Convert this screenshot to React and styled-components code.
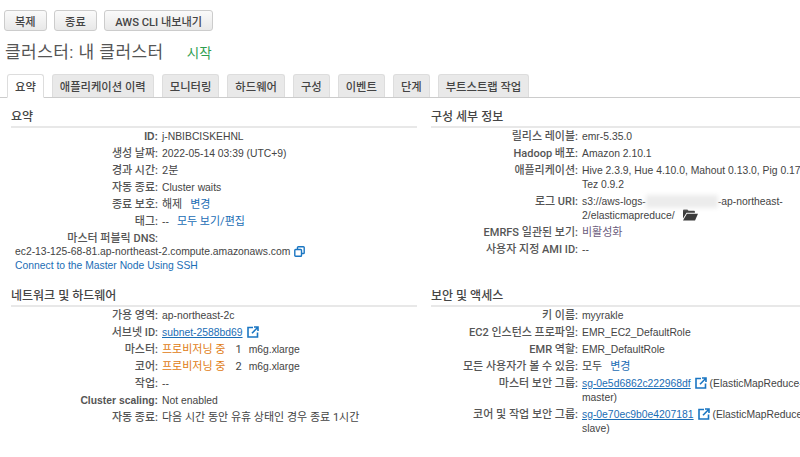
import React from 'react';
import styled, { createGlobalStyle, css } from 'styled-components';

const GlobalStyle = createGlobalStyle`
  html, body {
    margin: 0;
    padding: 0;
    background: #fff;
    overflow: hidden;
  }
  body {
    font-family: Roboto, "Noto Sans CJK KR", sans-serif;
    font-size: 11px;
    color: #444;
  }
`;

const latinText = css`
  font-family: "Liberation Sans", "Noto Sans CJK KR", sans-serif;
  font-size: 10.35px;
`;

const Page = styled.div`
  width: 800px;
  height: 457px;
  overflow: hidden;
  padding-top: 10px;
  box-sizing: border-box;
`;

const Toolbar = styled.div`
  display: flex;
  gap: 7.5px;
  padding-left: 4px;
`;

const Button = styled.button`
  height: 21px;
  padding: 0 10px;
  border: 1px solid #ccc;
  border-radius: 3px;
  background: linear-gradient(#fafafa, #e8e8e8);
  color: #444;
  font-family: inherit;
  font-size: 11.2px;
  font-weight: 500;
  white-space: nowrap;
`;

const TitleRow = styled.div`
  display: flex;
  align-items: baseline;
  height: 26px;
  margin-top: 7px;
  padding-left: 5px;
`;

const Title = styled.h1`
  margin: 0;
  font-size: 17px;
  font-weight: normal;
  letter-spacing: 0.45px;
  color: #555;
`;

const Status = styled.span`
  margin-left: 23px;
  font-size: 13.5px;
  color: #2e9e4f;
`;

const Tabs = styled.div`
  display: flex;
  gap: 8px;
  height: 23px;
  margin-top: 10px;
  padding-left: 7px;
  border-bottom: 1px solid #ccc;
`;

const Tab = styled.div`
  display: flex;
  align-items: center;
  height: 22px;
  padding: 0 7px;
  border: 1px solid #ddd;
  border-bottom: ${({ $active }) => ($active ? '1px solid #fff' : '0')};
  border-radius: 3px 3px 0 0;
  background: ${({ $active }) => ($active ? '#fff' : '#e9e9e9')};
  color: #444;
  font-size: 11.3px;
  font-weight: 500;
  white-space: nowrap;
`;

const Columns = styled.div`
  display: grid;
  grid-template-columns: 406px 420px;
  column-gap: 14px;
  padding-left: 11px;
  margin-top: 12px;
`;

const Section = styled.section`
  height: ${({ $height }) => $height}px;
`;

const SectionTitle = styled.h2`
  margin: 0;
  height: 15px;
  padding-bottom: 1px;
  border-bottom: 2px solid #e8e8e8;
  font-size: 12px;
  line-height: 15px;
  font-weight: 500;
  color: #444;
`;

const Rows = styled.div`
  display: grid;
  grid-template-columns: ${({ $label }) => $label}px ${({ $value }) => $value}px;
  column-gap: 4px;
  row-gap: 3px;
  margin-top: 2px;
  line-height: 14px;
`;

const Label = styled.div`
  text-align: right;
  font-weight: ${({ $latin }) => ($latin ? 700 : 500)};
  color: #555;
  white-space: nowrap;
  ${({ $latin }) => $latin && latinText}
`;

const Value = styled.div`
  min-height: 14px;
  color: ${({ $muted }) => ($muted ? '#6b5b7b' : '#444')};
  ${({ $latin }) => $latin && latinText}
`;

const Latin = styled.span`
  ${latinText}
  margin-left: ${({ $gap }) => $gap || 0}px;
`;

const Link = styled.a`
  color: #1a6db5;
  margin-left: ${({ $gap }) => $gap || 0}px;
  text-decoration: ${({ $under }) => ($under ? 'underline' : 'none')};
`;

const Provisioning = styled.span`
  color: #e07b12;
  margin-right: 10px;
`;

const Blurred = styled.span`
  display: inline-block;
  width: 72px;
  height: 13px;
  vertical-align: -3px;
  background: #ececec;
  filter: blur(2px);
`;

const DnsBlock = styled.div`
  ${latinText}
  padding-left: 4px;
  line-height: 14px;
  margin-top: -1px;
`;

const IconWrap = styled.span`
  display: inline-block;
  margin-left: ${({ $gap }) => $gap || 4}px;
  vertical-align: -2px;
  svg {
    display: block;
  }
`;

const ExternalIcon = () => (
  <IconWrap>
    <svg width="12" height="12" viewBox="0 0 12 12" fill="none" stroke="#1a76c2" strokeWidth="1.6">
      <path d="M6 1.5H1v9.5h9.5V6.5" />
      <path d="M5 7.2 10.4 1.8M7 1h4v4" />
    </svg>
  </IconWrap>
);

const CopyIcon = () => (
  <IconWrap>
    <svg width="11" height="11" viewBox="0 0 11 11" fill="#fff" stroke="#1a76c2" strokeWidth="1.4">
      <rect x="3.5" y="0.8" width="6.7" height="6.7" rx="0.8" />
      <rect x="0.8" y="3.5" width="6.7" height="6.7" rx="0.8" />
    </svg>
  </IconWrap>
);

const FolderIcon = () => (
  <IconWrap $gap={8}>
    <svg width="15" height="12" viewBox="0 0 15 12" fill="#3b3b3b">
      <path d="M0 1.5C0 .8.5.4 1 .4h3.4l1.2 1.4h5.3c.6 0 1 .4 1 1v1H3.5L0 9.5z" />
      <path d="M3.9 4.8H15l-3 6.6H0z" />
    </svg>
  </IconWrap>
);

const tabs = ['요약', '애플리케이션 이력', '모니터링', '하드웨어', '구성', '이벤트', '단계', '부트스트랩 작업'];

export default function App() {
  return (
    <>
      <GlobalStyle />
      <Page>
        <Toolbar>
          <Button>복제</Button>
          <Button>종료</Button>
          <Button>AWS CLI 내보내기</Button>
        </Toolbar>
        <TitleRow>
          <Title>클러스터: 내 클러스터</Title>
          <Status>시작</Status>
        </TitleRow>
        <Tabs>
          {tabs.map((t, i) => (
            <Tab key={t} $active={i === 0}>{t}</Tab>
          ))}
        </Tabs>
        <Columns>
          <Section $height={179}>
            <SectionTitle>요약</SectionTitle>
            <Rows $label={147} $value={250}>
              <Label $latin>ID:</Label>
              <Value $latin>j-NBIBCISKEHNL</Value>
              <Label>생성 날짜:</Label>
              <Value $latin>2022-05-14 03:39 (UTC+9)</Value>
              <Label>경과 시간:</Label>
              <Value>2분</Value>
              <Label>자동 종료:</Label>
              <Value $latin>Cluster waits</Value>
              <Label>종료 보호:</Label>
              <Value>해제<Link $gap={8}>변경</Link></Value>
              <Label>태그:</Label>
              <Value><Latin>--</Latin><Link $gap={8}>모두 보기/편집</Link></Value>
              <Label>마스터 퍼블릭 DNS:</Label>
              <Value />
            </Rows>
            <DnsBlock>
              ec2-13-125-68-81.ap-northeast-2.compute.amazonaws.com<CopyIcon />
              <br />
              <Link>Connect to the Master Node Using SSH</Link>
            </DnsBlock>
          </Section>
          <Section $height={179}>
            <SectionTitle>구성 세부 정보</SectionTitle>
            <Rows $label={147} $value={240}>
              <Label>릴리스 레이블:</Label>
              <Value $latin>emr-5.35.0</Value>
              <Label>Hadoop 배포:</Label>
              <Value $latin>Amazon 2.10.1</Value>
              <Label>애플리케이션:</Label>
              <Value $latin>Hive 2.3.9, Hue 4.10.0, Mahout 0.13.0, Pig 0.17.0, Tez 0.9.2</Value>
              <Label>로그 URI:</Label>
              <Value $latin>s3://aws-logs-<Blurred />-ap-northeast-2/elasticmapreduce/<FolderIcon /></Value>
              <Label>EMRFS 일관된 보기:</Label>
              <Value $muted>비활성화</Value>
              <Label>사용자 지정 AMI ID:</Label>
              <Value $latin>--</Value>
            </Rows>
          </Section>
          <Section $height={150}>
            <SectionTitle>네트워크 및 하드웨어</SectionTitle>
            <Rows $label={147} $value={250}>
              <Label>가용 영역:</Label>
              <Value $latin>ap-northeast-2c</Value>
              <Label>서브넷 ID:</Label>
              <Value $latin><Link $under>subnet-2588bd69</Link><ExternalIcon /></Value>
              <Label>마스터:</Label>
              <Value><Provisioning>프로비저닝 중</Provisioning>1<Latin $gap={7}>m6g.xlarge</Latin></Value>
              <Label>코어:</Label>
              <Value><Provisioning>프로비저닝 중</Provisioning>2<Latin $gap={7}>m6g.xlarge</Latin></Value>
              <Label>작업:</Label>
              <Value $latin>--</Value>
              <Label $latin>Cluster scaling:</Label>
              <Value $latin>Not enabled</Value>
              <Label>자동 종료:</Label>
              <Value>다음 시간 동안 유휴 상태인 경우 종료 1시간</Value>
            </Rows>
          </Section>
          <Section $height={150}>
            <SectionTitle>보안 및 액세스</SectionTitle>
            <Rows $label={147} $value={240}>
              <Label>키 이름:</Label>
              <Value $latin>myyrakle</Value>
              <Label>EC2 인스턴스 프로파일:</Label>
              <Value $latin>EMR_EC2_DefaultRole</Value>
              <Label>EMR 역할:</Label>
              <Value $latin>EMR_DefaultRole</Value>
              <Label>모든 사용자가 볼 수 있음:</Label>
              <Value>모두<Link $gap={8}>변경</Link></Value>
              <Label>마스터 보안 그룹:</Label>
              <Value $latin><Link $under>sg-0e5d6862c222968df</Link><ExternalIcon /> (ElasticMapReduce-master)</Value>
              <Label>코어 및 작업 보안 그룹:</Label>
              <Value $latin><Link $under>sg-0e70ec9b0e4207181</Link><ExternalIcon /> (ElasticMapReduce-slave)</Value>
            </Rows>
          </Section>
        </Columns>
      </Page>
    </>
  );
}
